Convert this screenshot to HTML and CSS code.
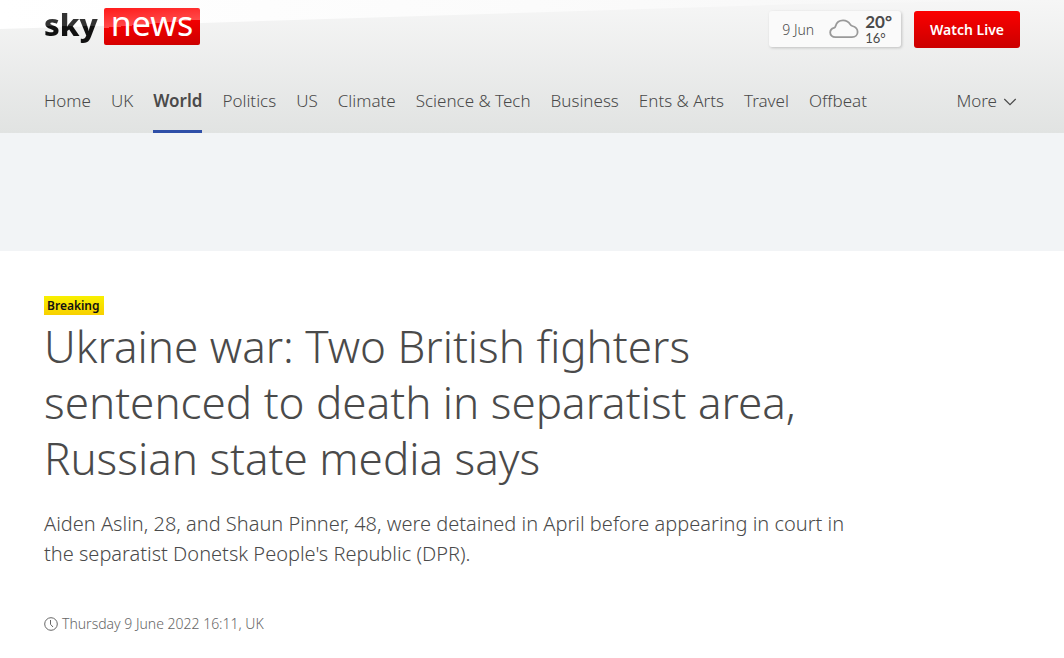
FILE: index.html
```html
<!DOCTYPE html>
<html lang="en">

<head>
  <meta charset="UTF-8">
  <meta name="viewport" content="width=device-width, initial-scale=1.0">
  <title>Ukraine war: Two British fighters sentenced to death | Sky News</title>
  <link rel="stylesheet" href="styles.css">
</head>

<body>
  <header class="site-header">
    <div class="header-top">
      <a class="logo" href="#">
        <span class="logo-sky">sky</span>
        <span class="logo-news">news</span>
      </a>

      <div class="header-tools">
        <a class="weather" href="#">
          <span class="weather-date">9 Jun</span>
          <svg class="weather-icon" width="30" height="20" viewBox="0 0 30 20" fill="none" stroke="#999" stroke-width="1.8" aria-hidden="true">
            <path d="M6.500 18.200C3.300 18.200 1.200 16.200 1.200 13.400C1.200 11.200 2.700 9.600 5 8.900C6 8.600 6.300 8 6.600 6.900C7.600 3.500 10.300 1.300 14 1.300C17.500 1.300 19.800 2.900 21.200 5.400C21.700 6.300 22.300 6.700 23.300 7C26.500 7.900 28.600 10 28.600 12.900C28.600 16 26.300 18.200 23 18.200Z" />
          </svg>
          <span class="weather-temps">
            <span class="temp-high">20°</span>
            <span class="temp-low">16°</span>
          </span>
        </a>
        <a class="watch-live" href="#">Watch Live</a>
      </div>
    </div>

    <nav class="main-nav">
      <ul class="nav-list">
        <li><a href="#">Home</a></li>
        <li><a href="#">UK</a></li>
        <li><a class="active" href="#">World</a></li>
        <li><a href="#">Politics</a></li>
        <li><a href="#">US</a></li>
        <li><a href="#">Climate</a></li>
        <li><a href="#">Science &amp; Tech</a></li>
        <li><a href="#">Business</a></li>
        <li><a href="#">Ents &amp; Arts</a></li>
        <li><a href="#">Travel</a></li>
        <li><a href="#">Offbeat</a></li>
      </ul>
      <button class="nav-more" type="button">
        More
        <svg width="14" height="10" viewBox="0 0 14 10" fill="none" stroke="currentColor" stroke-width="1.2" aria-hidden="true">
          <path d="M1.300 3L7 8.700L12.700 3" />
        </svg>
      </button>
    </nav>
  </header>

  <div class="ad-slot"></div>

  <main class="article">
    <span class="tag-breaking">Breaking</span>
    <h1>Ukraine war: Two British fighters sentenced to death in separatist area, Russian state media says</h1>
    <p class="standfirst">Aiden Aslin, 28, and Shaun Pinner, 48, were detained in April before appearing in court in the separatist Donetsk People's Republic (DPR).</p>
    <p class="date">
      <svg width="14" height="14" viewBox="0 0 14 14" fill="none" stroke="currentColor" aria-hidden="true">
        <circle cx="7" cy="7" r="6.300" />
        <path d="M6.500 3V7.300L9 10" />
      </svg>
      Thursday 9 June 2022 16:11, UK
    </p>
  </main>
</body>

</html>
```

FILE: styles.css
```css
body {
  margin: 0;
  background-color: #fff;
  color: #4a4a4a;
  font-family: "Noto Sans", "Open Sans", sans-serif;
  font-weight: 300;
}

a {
  color: inherit;
  text-decoration: none;
}

.site-header {
  position: relative;
  padding: 8px 44px 0;
  background: linear-gradient(#f6f6f6, #e1e3e2);
}

/* glossy highlight across the top of the header */
.site-header::before {
  content: "";
  position: absolute;
  top: 0;
  left: 0;
  right: 0;
  height: 29px;
  background: linear-gradient(to right, #fff, #fbfbfb 50%, #f6f6f6);
  clip-path: polygon(0 0, 100% 0, 75% 14%, 50% 43%, 19% 79%, 0 100%);
}

.header-top {
  position: relative;
  display: flex;
  justify-content: space-between;
  align-items: flex-start;
}

.logo {
  display: flex;
  gap: 6px;
}

.logo-sky {
  font-size: 31px;
  font-weight: 800;
  line-height: 32px;
  background: linear-gradient(#333 50%, #111 50%);
  background-clip: text;
  color: transparent;
}

.logo-news {
  height: 37px;
  padding: 0 7px;
  border-radius: 2px;
  background: linear-gradient(175deg, #ff1a1a, #ff4a4a 44%, #f20000 44%, #cb0000);
  color: #fff;
  font-size: 34px;
  font-weight: 400;
  line-height: 30px;
}

.header-tools {
  display: flex;
  gap: 13px;
  padding-top: 3px;
}

.weather {
  display: flex;
  align-items: center;
  height: 36px;
  padding: 0 9px 0 13px;
  border-radius: 3px;
  background-color: #fafafa;
  box-shadow: 1px 1px 3px rgba(0, 0, 0, 0.2);
}

.weather-date {
  margin-right: 15px;
  font-size: 14px;
}

.weather-icon {
  margin-right: 6px;
}

.weather-temps {
  display: flex;
  flex-direction: column;
  font-family: Lato, "Noto Sans", sans-serif;
}

.temp-high {
  font-size: 17px;
  font-weight: 700;
  line-height: 18px;
}

.temp-low {
  font-size: 13px;
  font-weight: 400;
  line-height: 14px;
}

.watch-live {
  padding: 0 16px;
  border-radius: 3px;
  background: linear-gradient(#fb0000, #cb0000);
  color: #fff;
  font-size: 14px;
  font-weight: 600;
  line-height: 37px;
}

.main-nav {
  display: flex;
  justify-content: space-between;
  margin-top: 22px;
  font-size: 17px;
}

.nav-list {
  display: flex;
  gap: 20px;
  margin: 0;
  padding: 0;
  list-style: none;
}

.nav-list a {
  display: block;
  height: 60px;
  border-bottom: 3px solid transparent;
  line-height: 62px;
  white-space: nowrap;
}

.nav-list .active {
  border-bottom-color: #2f4fa8;
  font-weight: 600;
}

.nav-more {
  display: flex;
  align-items: center;
  gap: 6px;
  height: 61px;
  padding: 0 3px;
  border: none;
  background: none;
  color: inherit;
  font: inherit;
  cursor: pointer;
}

.ad-slot {
  height: 118px;
  background-color: #f2f4f6;
}

.article {
  max-width: 812px;
  padding: 45px 44px 0;
}

.tag-breaking {
  display: block;
  width: fit-content;
  padding: 0 4px 0 3px;
  background: linear-gradient(#f8f000, #f8d000);
  color: #111;
  font-size: 12px;
  font-weight: 600;
  line-height: 19px;
}

.article h1 {
  margin: 3px 0 0;
  font-size: 44px;
  font-weight: 300;
  line-height: 56px;
}

.standfirst {
  margin: 23px 0 0;
  font-size: 20px;
  line-height: 30px;
}

.date {
  display: flex;
  align-items: center;
  gap: 4px;
  margin: 44px 0 0;
  color: #666;
  font-size: 14px;
  line-height: 22px;
}
```
